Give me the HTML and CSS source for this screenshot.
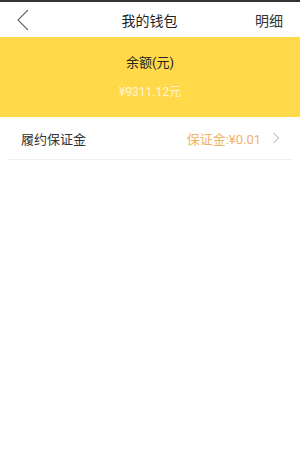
FILE: index.html
```html
<!DOCTYPE html>
<html lang="zh">
<head>
    <meta charset="UTF-8">
    <meta name="viewport" content="width=device-width, initial-scale=1.0">
    <title>我的钱包</title>
    <link rel="stylesheet" href="styles.css">
</head>
<body>
    <div class="status"></div>
    <div class="header">
        <span class="back">
            <svg width="14" height="22" viewBox="0 0 14 22"><path d="M12 1 L2 11 L12 21" fill="none" stroke="#666" stroke-width="1.1"/></svg>
        </span>
        <span class="title">我的钱包</span>
        <span class="detail">明细</span>
    </div>
    <div class="balance">
        <div class="balance-label">余额(元)</div>
        <div class="balance-value">¥9311.12元</div>
    </div>
    <div class="row">
        <span class="row-label">履约保证金</span>
        <span class="row-value">保证金:¥0.01</span>
        <svg class="arrow" width="8" height="12" viewBox="0 0 8 12"><path d="M1.5 1 L6.5 6 L1.5 11" fill="none" stroke="#aaa" stroke-width="1"/></svg>
    </div>
</body>
</html>
```

FILE: styles.css
```css
body {
    margin: 0;
    font-family: Roboto, "Noto Sans CJK SC", sans-serif;
    background-color: #fff;
    color: #333;
}
.status {
    height: 2px;
    background-color: #333;
}
.header {
    height: 35px;
    display: flex;
    align-items: center;
    justify-content: space-between;
    padding: 0 17px 0 16px;
    background-color: #fff;
}
.back {
    display: flex;
    width: 40px;
}
.title {
    font-size: 14px;
    color: #222;
}
.detail {
    font-size: 14px;
    color: #333;
    width: 40px;
    text-align: right;
}
.balance {
    height: 80px;
    background-color: #FFD94A;
    display: flex;
    flex-direction: column;
    align-items: center;
    padding-top: 16px;
    box-sizing: border-box;
}
.balance-label {
    font-size: 13px;
    color: #222;
    line-height: 20px;
}
.balance-value {
    font-size: 12px;
    color: #FFF6D8;
    line-height: 20px;
    margin-top: 9px;
}
.row {
    margin: 0 8px;
    height: 42px;
    display: flex;
    align-items: center;
    padding: 0 12px 0 13px;
    border-bottom: 1px solid #F0F0F0;
}
.row-label {
    font-size: 13px;
    color: #333;
    flex: 1;
}
.row-value {
    font-size: 13px;
    color: #F2B467;
    margin-right: 11px;
}
```
